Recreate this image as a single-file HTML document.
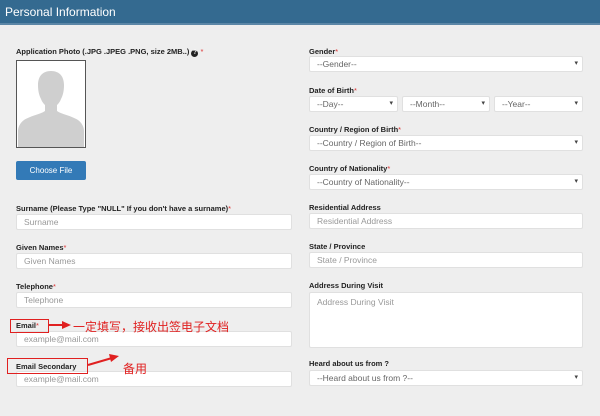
<!DOCTYPE html>
<html><head><meta charset="utf-8"><style>
*{margin:0;padding:0;box-sizing:border-box}
body{width:600px;height:416px;background:#eeeeee;font-family:"Liberation Sans",Arial,sans-serif;position:relative;overflow:hidden}
.hd{position:absolute;left:0;top:0;width:600px;height:25px;background:#346a90;color:#fff;font-size:12px;line-height:25px;padding-left:5px;border-bottom:2px solid #5b86a6}
.l{position:absolute;font-size:7.5px;font-weight:bold;color:#222;white-space:nowrap}
.l i{color:#d33;font-style:normal;font-weight:normal}
.f{position:absolute;background:#fff;border:1px solid #e0e0e0;border-radius:2px;font-size:8.5px;color:#999;padding-left:7px;line-height:14px;height:16px;white-space:nowrap}
.s{color:#666}
.s:after{content:"▾";position:absolute;right:4px;top:0;font-size:7px;color:#444}
.r{position:absolute;border:1.5px solid #e02020}
.cn{position:absolute;color:#e02020;font-size:12px;font-family:"Liberation Sans","Noto Sans CJK SC",sans-serif;white-space:nowrap}
</style></head><body>
<div class="hd">Personal Information</div>
<div class="l" style="left:16px;top:47px">Application Photo (.JPG .JPEG .PNG, size 2MB..) <span style="display:inline-block;width:7px;height:7px;border-radius:50%;background:#222;color:#fff;font-size:6px;text-align:center;line-height:7px">?</span> <i>*</i></div>
<div style="position:absolute;left:16px;top:60px;width:70px;height:88px;background:#fff;border:1px solid #555;overflow:hidden">
<svg width="68" height="86" viewBox="0 0 68 86"><path d="M34 10c-9 0-13 6-13 14 0 6 1 10 3 14 1 3 3 5 4 6v6c-4 3-15 5-21 9-4 3-6 7-6 11v16h66V70c0-4-2-8-6-11-6-4-17-6-21-9v-6c1-1 3-3 4-6 2-4 3-8 3-14 0-8-4-14-13-14z" fill="#cfcfcf"/></svg></div>
<div style="position:absolute;left:16px;top:161px;width:70px;height:19px;background:#337ab7;color:#fff;font-size:8px;text-align:center;line-height:19px;border-radius:2px">Choose File</div>

<div class="l" style="left:16px;top:204px">Surname (Please Type "NULL" If you don't have a surname)<i>*</i></div>
<div class="f" style="left:16px;top:214px;width:276px">Surname</div>
<div class="l" style="left:16px;top:243px">Given Names<i>*</i></div>
<div class="f" style="left:16px;top:253px;width:276px">Given Names</div>
<div class="l" style="left:16px;top:282px">Telephone<i>*</i></div>
<div class="f" style="left:16px;top:292px;width:276px">Telephone</div>
<div class="l" style="left:16px;top:321px">Email<i>*</i></div>
<div class="f" style="left:16px;top:331px;width:276px">example@mail.com</div>
<div class="l" style="left:16px;top:362px">Email Secondary</div>
<div class="f" style="left:16px;top:371px;width:276px">example@mail.com</div>

<div class="r" style="left:10px;top:319px;width:39px;height:14px"></div>
<div class="r" style="left:7px;top:358px;width:81px;height:16px"></div>
<svg style="position:absolute;left:0;top:0" width="600" height="416"><path d="M49 325 L64 325" stroke="#e02020" stroke-width="2"/><path d="M62 321 L71 325 L62 329z" fill="#e02020"/><path d="M88 365 L112 358" stroke="#e02020" stroke-width="2"/><path d="M109 354 L119 356 L111 362z" fill="#e02020"/></svg>
<div class="cn" style="left:73px;top:318px">一定填写，接收出签电子文档</div>
<div class="cn" style="left:123px;top:360px">备用</div>

<div class="l" style="left:309px;top:47px">Gender<i>*</i></div>
<div class="f s" style="left:309px;top:56px;width:274px">--Gender--</div>
<div class="l" style="left:309px;top:86px">Date of Birth<i>*</i></div>
<div class="f s" style="left:309px;top:96px;width:89px">--Day--</div>
<div class="f s" style="left:402px;top:96px;width:88px">--Month--</div>
<div class="f s" style="left:494px;top:96px;width:89px">--Year--</div>
<div class="l" style="left:309px;top:125px">Country / Region of Birth<i>*</i></div>
<div class="f s" style="left:309px;top:135px;width:274px">--Country / Region of Birth--</div>
<div class="l" style="left:309px;top:164px">Country of Nationality<i>*</i></div>
<div class="f s" style="left:309px;top:174px;width:274px">--Country of Nationality--</div>
<div class="l" style="left:309px;top:203px">Residential Address</div>
<div class="f" style="left:309px;top:213px;width:274px">Residential Address</div>
<div class="l" style="left:309px;top:242px">State / Province</div>
<div class="f" style="left:309px;top:252px;width:274px">State / Province</div>
<div class="l" style="left:309px;top:281px">Address During Visit</div>
<div class="f" style="left:309px;top:292px;width:274px;height:56px;line-height:18px">Address During Visit</div>
<div class="l" style="left:309px;top:359px">Heard about us from ?</div>
<div class="f s" style="left:309px;top:370px;width:274px">--Heard about us from ?--</div>
</body></html>
